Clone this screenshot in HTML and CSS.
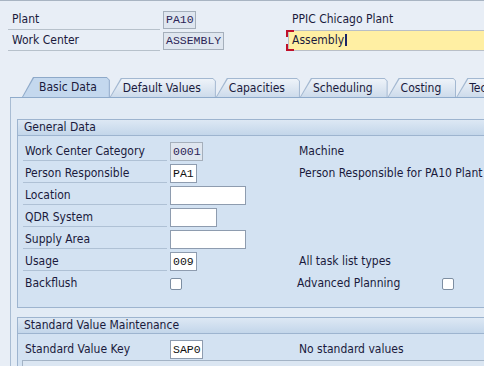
FILE: index.html
```html
<!DOCTYPE html>
<html lang="en">
<head>
    <meta charset="UTF-8">
    <meta name="viewport" content="width=device-width, initial-scale=1.0">
    <title>Work Center</title>
    <link rel="stylesheet" href="styles.css">
</head>
<body>
    <div class="header">
        <div class="hlabel">Plant</div>
        <div class="hcell"><span class="field ro f4">PA10</span></div>
        <div class="hdesc">PPIC Chicago Plant</div>

        <div class="hlabel">Work Center</div>
        <div class="hcell"><span class="field ro f8">ASSEMBLY</span></div>
        <div class="hdesc"><div class="long-input req">Assembly<span class="caret"></span></div></div>
    </div>

    <div class="tabs">
        <div class="tab active"><span>Basic Data</span></div>
        <div class="tab"><span>Default Values</span></div>
        <div class="tab"><span>Capacities</span></div>
        <div class="tab"><span>Scheduling</span></div>
        <div class="tab"><span>Costing</span></div>
        <div class="tab"><span>Technical Data</span></div>
    </div>

    <div class="panel">
        <div class="group">
            <div class="group-title">General Data</div>
            <div class="form">
                <div class="lbl">Work Center Category</div>
                <span class="field ro f4">0001</span>
                <div class="desc">Machine</div>

                <div class="lbl">Person Responsible</div>
                <span class="field f3">PA1</span>
                <div class="desc">Person Responsible for PA10 Plant</div>

                <div class="lbl">Location</div>
                <span class="field f10"></span>
                <div class="desc"></div>

                <div class="lbl">QDR System</div>
                <span class="field f6"></span>
                <div class="desc"></div>

                <div class="lbl">Supply Area</div>
                <span class="field f10"></span>
                <div class="desc"></div>

                <div class="lbl">Usage</div>
                <span class="field f3">009</span>
                <div class="desc">All task list types</div>

                <div class="lbl plain">Backflush</div>
                <span class="check"></span>
                <div class="desc check-row"><span class="check-text">Advanced Planning</span><span class="check"></span></div>
            </div>
        </div>

        <div class="group second">
            <div class="group-title">Standard Value Maintenance</div>
            <div class="form short">
                <div class="lbl plain">Standard Value Key</div>
                <span class="field f4">SAP0</span>
                <div class="desc">No standard values</div>
            </div>
            <div class="subtable"></div>
        </div>
    </div>
</body>
</html>
```

FILE: styles.css
```css
* {
    margin: 0;
    padding: 0;
    box-sizing: border-box;
}

html {
    overflow: hidden;
}

body {
    width: 484px;
    height: 366px;
    overflow: hidden;
    background-color: #e8eef6;
    border-top: 1px solid #a8b4c2;
    font-family: "DejaVu Sans Condensed", "DejaVu Sans", sans-serif;
    font-stretch: condensed;
    font-size: 12px;
    color: #1a1a3c;
}

/* header fields */

.header {
    display: grid;
    grid-template-columns: 152px 128px 1fr;
    grid-auto-rows: 21px;
    padding: 8px 0 0 8px;
}

.hlabel {
    border-bottom: 1px solid #b7c1cb;
    padding-left: 4px;
    line-height: 20px;
}

.hcell {
    display: flex;
    align-items: center;
    padding-left: 3px;
}

.hcell .field {
    height: 18px;
    line-height: 16px;
}

.hdesc {
    padding-left: 4px;
    line-height: 21px;
}

.long-input {
    position: relative;
    height: 21px;
    margin-left: -4px;
    padding-left: 3px;
    line-height: 19px;
    background-color: #ffefa3;
    border: 1px solid #b9bfc7;
    border-right: none;
}

.req::before,
.req::after {
    content: "";
    position: absolute;
    left: -3px;
    width: 6px;
    height: 5px;
    border-left: 2px solid #c0102a;
}

.req::before {
    top: -1px;
    border-top: 2px solid #c0102a;
}

.req::after {
    bottom: -1px;
    border-bottom: 2px solid #c0102a;
}

.caret {
    display: inline-block;
    width: 2px;
    height: 12px;
    margin-left: 1px;
    vertical-align: -2px;
    background-color: #1b2466;
}

/* input fields */

.field {
    display: inline-block;
    justify-self: start;
    height: 19px;
    padding: 0 2px;
    border: 1px solid #8e9caf;
    background-color: #fff;
    font-family: "Liberation Mono", monospace;
    font-size: 11.5px;
    line-height: 17px;
    color: #111;
    white-space: nowrap;
    overflow: hidden;
}

.field.ro {
    background-color: #dfe6ef;
    border-color: #a5afbb;
    color: #2c2456;
}

.f3 { width: 27px; }
.f4 { width: 33px; }
.f6 { width: 47px; }
.f8 { width: 61px; }
.f10 { width: 76px; }

.check {
    justify-self: start;
    align-self: center;
    width: 12px;
    height: 12px;
    border: 1px solid #7d8ea2;
    border-radius: 2px;
    background-color: #fff;
}

/* tab strip */

.tabs {
    display: flex;
    align-items: flex-end;
    height: 22px;
    margin: 25px 0 0 10px;
    padding-left: 12px;
    border-bottom: 1px solid #8fabcb;
    white-space: nowrap;
    overflow: hidden;
}

.tab {
    flex-shrink: 0;
    height: 19px;
    padding: 1px 1px 0 1px;
    background-color: #a3b8d1;
    clip-path: polygon(11px 0, calc(100% - 3px) 0, 100% 3px, 100% 100%, 0 100%);
}

.tab span {
    display: block;
    height: 100%;
    padding: 0 14px 0 12px;
    line-height: 18px;
    background: linear-gradient(#eef3f9, #cddbeb);
    clip-path: polygon(11px 0, calc(100% - 2px) 0, 100% 2px, 100% 100%, 0 100%);
}

.tab.active {
    height: 20px;
    background-color: #8ea9c9;
}

.tab.active span {
    padding: 0 12px 0 16px;
    line-height: 19px;
    background: #c4d8ee;
}

/* tab panel */

.panel {
    width: 600px;
    height: 300px;
    margin-left: 10px;
    padding: 21px 0 0 6px;
    border-left: 1px solid #a8bcd3;
    background-color: #e2ebf5;
}

.group {
    border: 1px solid #9db4cf;
    background-color: #d3e2f2;
}

.group.second {
    margin-top: 9px;
}

.group-title {
    height: 16px;
    padding-left: 6px;
    line-height: 15px;
    border-bottom: 1px solid #9db4cf;
    background: linear-gradient(#dde8f4, #c3d6ea);
}

.form {
    display: grid;
    grid-template-columns: 144px 126px 1fr;
    grid-auto-rows: 19px;
    column-gap: 3px;
    row-gap: 3px;
    padding: 6px 0 14px 5px;
}

.form.short {
    padding-bottom: 1px;
}

.lbl {
    padding-left: 2px;
    line-height: 18px;
    border-bottom: 1px solid #afc1d5;
}

.lbl.plain {
    border-bottom: none;
}

.desc {
    line-height: 19px;
    white-space: nowrap;
}

.check-row {
    display: flex;
    align-items: center;
    margin-left: -2px;
}

.check-text {
    width: 145px;
}

.subtable {
    height: 30px;
    margin-left: 4px;
    border: 1px solid #a3b3c5;
    background-color: #dbe6f2;
}
```
